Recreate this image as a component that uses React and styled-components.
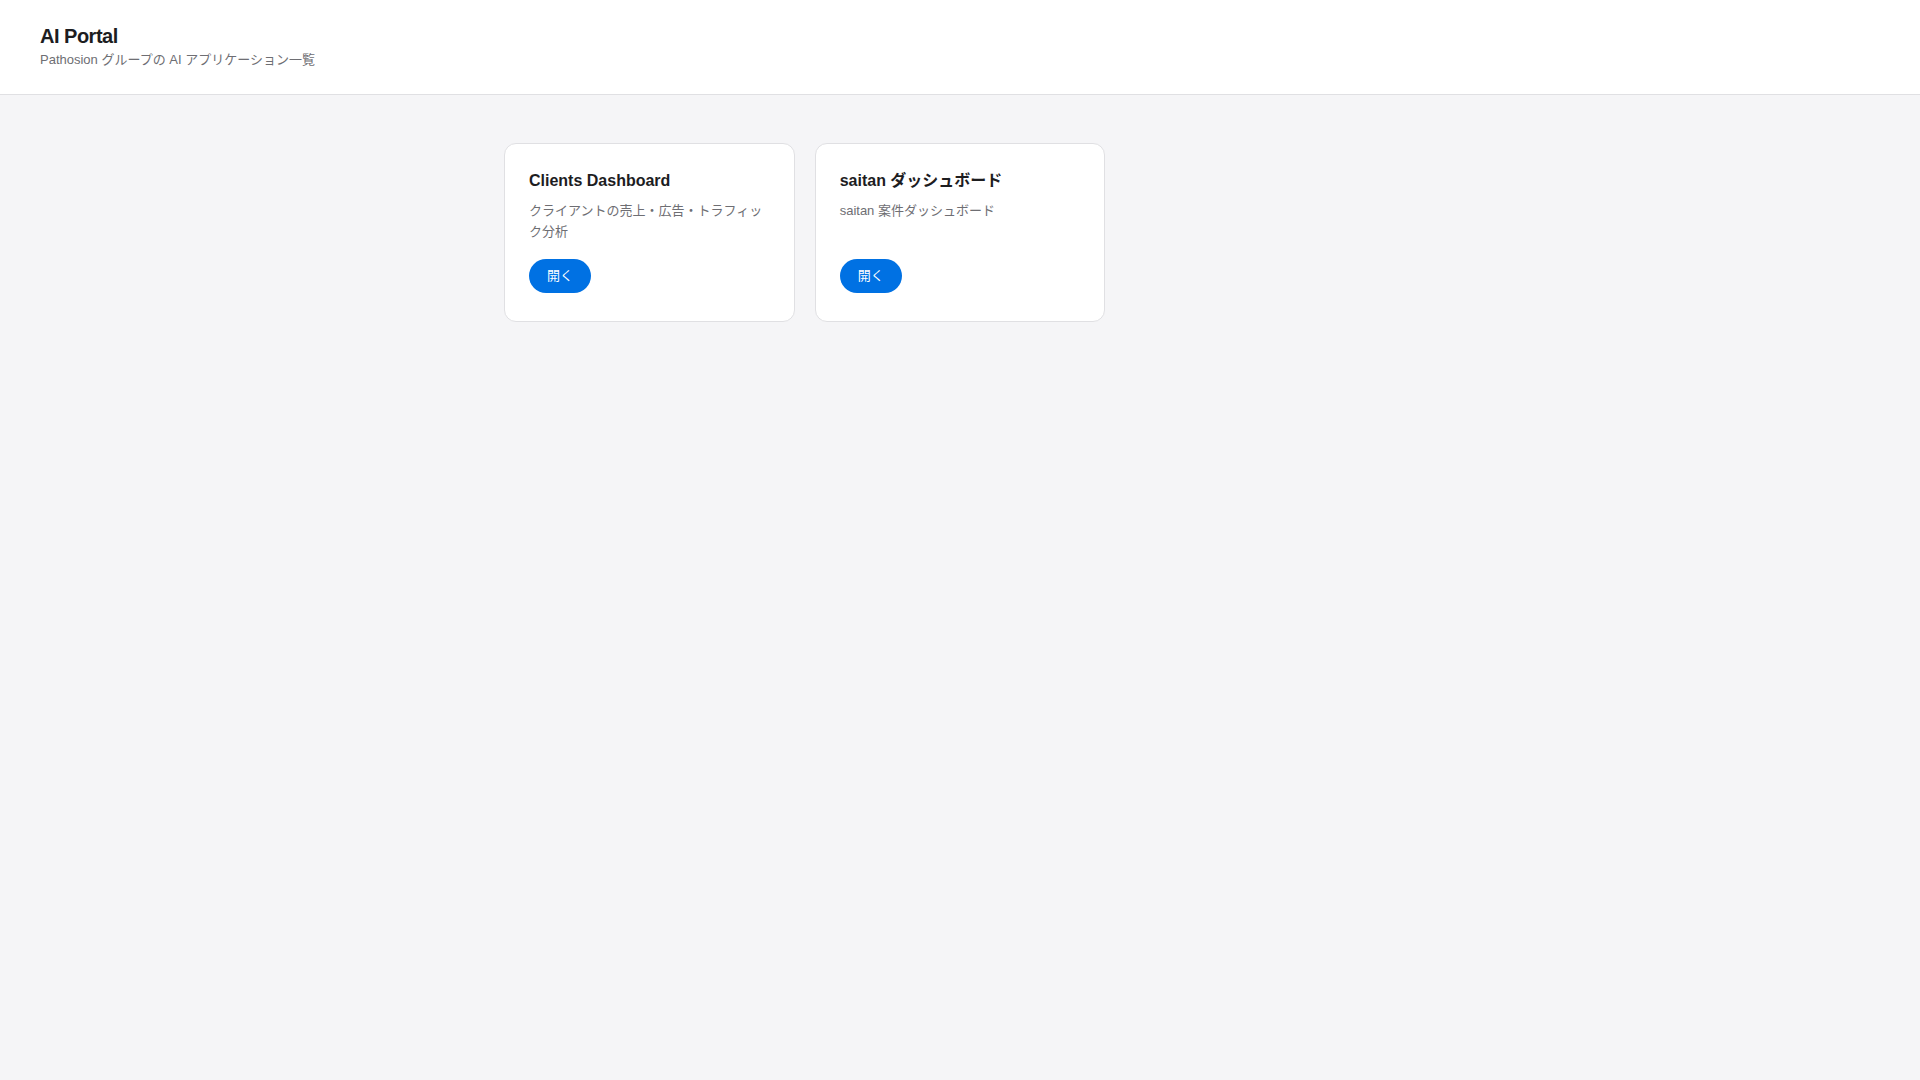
import React from "react";
import styled, {createGlobalStyle} from "styled-components";

const GlobalStyle = createGlobalStyle`
  * {
    box-sizing: border-box;
  }
  body {
    margin: 0;
    background: #f5f5f7;
    color: #1d1d1f;
    font-family: "Liberation Sans", "Noto Sans CJK JP", sans-serif;
  }
`;

const Header = styled.header`
  background: #ffffff;
  border-bottom: 1px solid #e0e0e3;
  padding: 24px 40px 24px;
`;

const Title = styled.h1`
  margin: 0;
  font-size: 20px;
  line-height: 1.2;
  font-weight: 700;
  letter-spacing: -0.5px;
  color: #1d1d1f;
`;

const Subtitle = styled.p`
  margin: 2px 0 0;
  font-size: 13px;
  line-height: 1.5;
  color: #6e6e73;
`;

const Main = styled.main`
  box-sizing: content-box;
  max-width: 912px;
  margin: 0 auto;
  padding: 48px 24px;
`;

const Grid = styled.div`
  display: grid;
  grid-template-columns: repeat(auto-fill, minmax(280px, 1fr));
  gap: 20px;
`;

const Card = styled.div`
  display: flex;
  flex-direction: column;
  background: #ffffff;
  border: 1px solid #e0e0e3;
  border-radius: 12px;
  padding: 26px 24px 28px;
`;

const CardTitle = styled.h2`
  margin: 0 0 9px;
  font-size: 16px;
  line-height: 1.4;
  font-weight: 700;
  color: #1d1d1f;
`;

const CardDesc = styled.p`
  flex: 1;
  margin: 0 0 17px;
  font-size: 13px;
  line-height: 1.6;
  color: #6e6e73;
`;

const OpenButton = styled.a`
  align-self: flex-start;
  display: inline-block;
  background: #0071e3;
  color: #ffffff;
  font-size: 13px;
  line-height: 18px;
  padding: 8px 18px;
  border-radius: 17px;
  text-decoration: none;
  cursor: pointer;
`;

const apps = [
    {name: "Clients Dashboard", desc: "クライアントの売上・広告・トラフィック分析"},
    {name: "saitan ダッシュボード", desc: "saitan 案件ダッシュボード"},
];

export default function App() {
    return (
        <>
            <GlobalStyle/>
            <Header>
                <Title>AI Portal</Title>
                <Subtitle>Pathosion グループの AI アプリケーション一覧</Subtitle>
            </Header>
            <Main>
                <Grid>
                    {apps.map((app) => (
                        <Card key={app.name}>
                            <CardTitle>{app.name}</CardTitle>
                            <CardDesc>{app.desc}</CardDesc>
                            <OpenButton>開く</OpenButton>
                        </Card>
                    ))}
                </Grid>
            </Main>
        </>
    );
}
